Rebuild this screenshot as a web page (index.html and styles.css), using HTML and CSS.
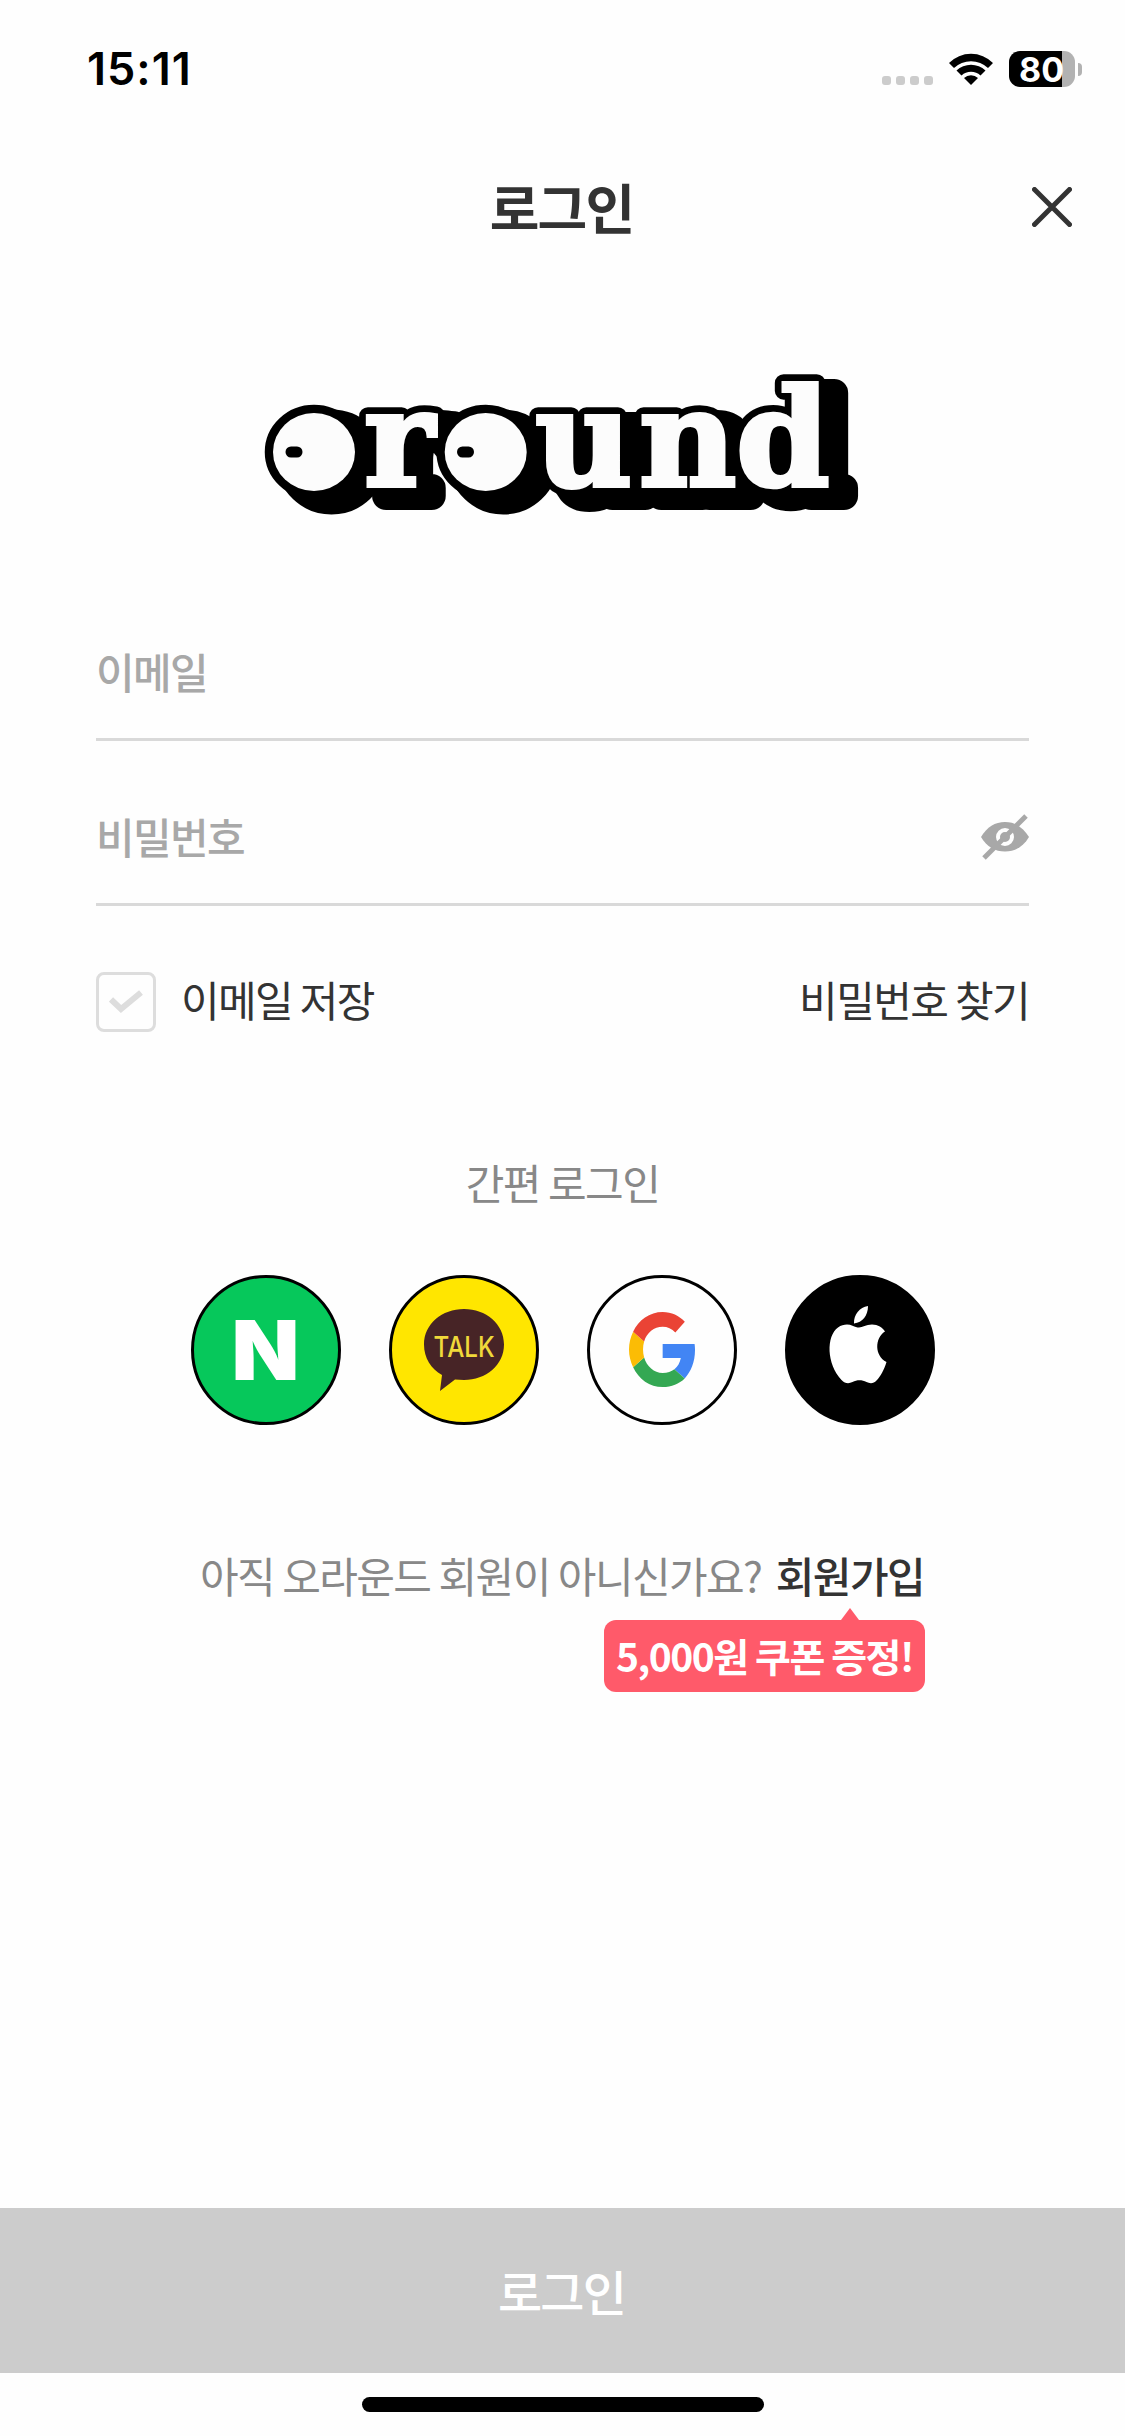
FILE: index.html
```html
<!DOCTYPE html>
<html lang="ko">
<head>
<meta charset="utf-8">
<title>로그인</title>
<link rel="stylesheet" href="styles.css">
</head>
<body>
<div class="screen">
  <header class="status">
    <span class="time">15:11</span>
    <div class="indicators">
      <div class="dots"><i></i><i></i><i></i><i></i></div>
      <svg class="wifi" viewBox="0 0 46 34" width="46" height="34">
        <path d="M1 11A31 31 0 0 1 45 11L40 16A24.500 24.500 0 0 0 6 16Z"/>
        <path d="M8.500 18.500A21 21 0 0 1 37.500 18.500L32.500 23.500A14 14 0 0 0 13.500 23.500Z"/>
        <path d="M16 26A10.500 10.500 0 0 1 30 26L23 33Z"/>
      </svg>
      <div class="battery"><span class="level">80</span></div>
      <div class="nub"></div>
    </div>
  </header>

  <div class="titlebar">
    <h1 class="title">로그인</h1>
    <svg class="close" viewBox="0 0 40 40" width="40" height="40"><path d="M2.500 2.500L37.500 37.500M37.500 2.500L2.500 37.500"/></svg>
  </div>

  <svg class="logo" viewBox="255 335 615 200" width="615" height="200">
    <defs>
      <g id="mark">
        <text class="wordmark" y="486"><tspan class="eye-letter" x="275" y="482">o</tspan><tspan x="364" y="486">r</tspan><tspan class="eye-letter" x="447" y="482">o</tspan><tspan x="535 639 736" y="486">und</tspan></text>
        <ellipse cx="314" cy="452" rx="40.500" ry="38.500"/>
        <ellipse cx="485.700" cy="452" rx="40.500" ry="38.500"/>
      </g>
    </defs>
    <use class="mark-shadow" href="#mark" x="17.500" y="10"/>
    <use class="mark-outline" href="#mark"/>
    <text class="wordmark face" y="486"><tspan x="364">r</tspan><tspan x="535 639 736">und</tspan></text>
    <ellipse class="eyeball" cx="314" cy="452" rx="41" ry="39"/>
    <ellipse class="eyeball" cx="485.700" cy="452" rx="41" ry="39"/>
    <rect x="285.500" y="446.500" width="17" height="11" rx="5.500"/>
    <rect x="457" y="446.500" width="17" height="11" rx="5.500"/>
  </svg>

  <main class="form">
    <div class="field"><span class="placeholder">이메일</span></div>
    <div class="field">
      <span class="placeholder">비밀번호</span>
      <svg class="eye" viewBox="0 0 48 46" width="48" height="46">
        <path class="eye-body" d="M0 23C6 13 14 8 24 8S42 13 48 23C42 33 34 37.500 24 37.500S6 33 0 23Z"/>
        <circle class="eye-ring" cx="24" cy="23" r="7"/>
        <path class="eye-slash" d="M3 44L45 2"/>
      </svg>
    </div>
    <div class="options">
      <label class="remember">
        <span class="checkbox"><svg viewBox="0 0 34 26" width="34" height="26"><path d="M2 10.500L12 20L32 3.500"/></svg></span>
        <span class="option-text">이메일 저장</span>
      </label>
      <span class="option-text">비밀번호 찾기</span>
    </div>
  </main>

  <section class="social">
    <h2 class="social-title">간편 로그인</h2>
    <div class="providers">
      <div class="provider naver"><svg viewBox="0 0 144 144" width="144" height="144"><text class="naver-n" transform="translate(37.500 102)" textLength="68" lengthAdjust="spacingAndGlyphs">N</text></svg></div>
      <div class="provider kakao"><svg viewBox="0 0 144 144" width="144" height="144">
        <path class="bubble" d="M72 31C94 31 112 46 112 66.500C112 87 94 102 72 102C69 102 66 101.800 63 101.500L48 113L50 97C39 91 32 80 32 66.500C32 46 50 31 72 31Z"/>
        <text class="talk" x="41.500" y="79" textLength="61" lengthAdjust="spacingAndGlyphs">TALK</text></svg></div>
      <div class="provider google"><svg viewBox="-39 -37 144 144" width="144" height="144"><g transform="translate(0 -3) scale(1.375 1.563)">
        <path fill="#4285f4" d="M48 24.550C48 22.900 47.900 21.700 47.700 20.450H24.480V29.500H37.700C37.100 32.500 35.400 35 33 36.650L40.500 42.500C45 38.300 48 32.100 48 24.550Z"/>
        <path fill="#34a853" d="M24.480 48C30.960 48 36.500 45.900 40.500 42.500L33 36.650C30.800 38.100 28 39 24.480 39C18.220 39 12.920 34.800 11 29.100L3 35.300C7 42.900 15 48 24.480 48Z"/>
        <path fill="#fbbc05" d="M11 29.100C10.500 27.500 10.200 25.800 10.200 24C10.200 22.200 10.500 20.500 11 18.900L3 12.700C1.100 16.300 0 20 0 24C0 28 1.100 31.800 3 35.300Z"/>
        <path fill="#ea4335" d="M24.480 9.500C28 9.500 31.200 10.700 33.700 13.100L40.600 6.200C36.400 2.400 31 0 24.480 0C15 0 7 5.100 3 12.700L11 18.900C12.920 13.200 18.220 9.500 24.480 9.500Z"/>
      </g></svg></div>
      <div class="provider apple"><svg viewBox="0 0 144 144" width="144" height="144">
        <path d="M80 28C80 37.500 74.500 44.500 66 45.500C65.500 36.500 71.500 29.500 80 28Z"/>
        <path d="M71 49.500C74.500 49.500 78 46.500 84 46.500C90 46.500 94.500 49.500 97 53.500C86.500 60 86.500 78 98.500 84C96 92 92.500 98.500 88.500 102.500C85.500 106 81.500 105.500 78.500 104C74 101.500 69 101.500 64.500 104C60.500 106 57 105.500 53.500 102C38.500 86 38 58 50 49.500C55 46 60.500 46 64.500 47.700C67 48.700 69 49.500 71 49.500Z"/></svg></div>
    </div>
  </section>

  <section class="join">
    <div class="join-line"><span class="question">아직 오라운드 회원이 아니신가요?</span><span class="signup">회원가입</span></div>
    <div class="coupon">5,000원 쿠폰 증정!</div>
  </section>

  <button class="submit">로그인</button>
  <footer class="home"><div class="home-bar"></div></footer>
</div>
</body>
</html>
```
FILE: styles.css
```css
* { box-sizing: border-box; }
body { margin: 0; background: #fefefe; font-family: "Noto Sans CJK KR", sans-serif; color: #333; }
.screen { display: flex; flex-direction: column; width: 1125px; height: 2436px; overflow: hidden; }
.screen > * { flex-shrink: 0; }

.status { display: flex; justify-content: space-between; height: 141px; padding: 44px 43px 0 87px; }
.time { font: 600 45px/50px Inter, sans-serif; color: #000; letter-spacing: 1px; }
.indicators { display: flex; height: 43px; align-items: flex-end; }
.dots { display: flex; gap: 5px; margin: 0 15px 2px 0; }
.dots i { width: 9px; height: 9px; border-radius: 3px; background: #ccc; }
.wifi { margin: 0 15px 1px 0; }
.battery { width: 66px; height: 36px; border-radius: 11px; background: linear-gradient(90deg, #000 53px, #b2b2b2 53px); }
.level { display: block; padding-left: 10px; font: 700 34px/37px Inter, sans-serif; color: #fff; }
.nub { width: 4px; height: 13px; margin: 0 0 11px 3px; border-radius: 0 4px 4px 0; background: #b2b2b2; }

.titlebar { display: grid; grid-template-columns: 1fr auto 1fr; align-items: center; height: 132px; padding: 0 53px 0 53px; }
.title { grid-column: 2; margin: 0; padding-right: 2px; font-size: 54px; line-height: 80px; font-weight: 700; letter-spacing: -1.800px; }
.close { justify-self: end; fill: none; stroke: #333; stroke-width: 5; stroke-linecap: round; }

.logo { margin: 62px 0 0 255px; }
.wordmark { font: 700 134px "DejaVu Serif", serif; }
.eye-letter { font-size: 115px; }
.mark-shadow { stroke: #000; stroke-width: 28; stroke-linejoin: round; }
.mark-outline { stroke: #000; stroke-width: 17.500px; stroke-linejoin: round; }
.face { fill: #fcfcfc; stroke: #fcfcfc; stroke-width: 4; }
.eyeball { fill: #fcfcfc; }

.form { padding: 41px 96px 0; }
.field { display: flex; justify-content: space-between; align-items: center; height: 165px; padding-top: 28px; border-bottom: 3px solid #d9d9d9; }
.placeholder { color: #a8a8a8; font-size: 42px; line-height: 60px; font-weight: 500; letter-spacing: -1.650px; }
.eye { margin-top: 2px; }
.eye-body { fill: #a8a8a8; }
.eye-ring { fill: none; stroke: #fefefe; stroke-width: 4; }
.eye-slash { stroke: #a8a8a8; stroke-width: 5; }
.options { display: flex; justify-content: space-between; align-items: center; height: 60px; margin-top: 66px; font-size: 42px; letter-spacing: -1.600px; word-spacing: -2.500px; }
.remember { display: flex; align-items: center; gap: 25px; }
.option-text { line-height: 60px; padding-bottom: 7px; }
.checkbox { display: grid; place-items: center; width: 60px; height: 60px; border: 3px solid #ddd; border-radius: 8px; }
.checkbox path { fill: none; stroke: #ddd; stroke-width: 6; }

.social { padding-top: 119px; }
.social-title { margin: 0; height: 124px; text-align: center; color: #888; font-size: 42px; line-height: 62px; font-weight: 400; letter-spacing: -1.600px; word-spacing: -2px; }
.providers { display: flex; justify-content: center; gap: 48px; }
.provider { width: 150px; height: 150px; border: 3px solid #000; border-radius: 50%; overflow: hidden; }
.provider svg { display: block; }
.naver { background: #06c85b; }
.naver-n { font: 900 82px Inter, sans-serif; fill: #fff; }
.kakao { background: #ffe600; }
.bubble { fill: #472426; }
.talk { font: 500 29px Inter, sans-serif; fill: #f0d93a; }
.apple { background: #000; fill: #fff; }

.join { display: flex; flex-direction: column; width: 725px; margin: 119px 0 0 200px; }
.join-line { display: flex; justify-content: space-between; height: 76px; font-size: 42px; line-height: 62px; letter-spacing: -1.600px; word-spacing: -2px; white-space: nowrap; }
.question { color: #888; }
.signup { padding-right: 1px; font-weight: 500; }
.coupon { position: relative; align-self: flex-end; width: 321px; height: 72px; border-radius: 12px; background: #ff5a6a; color: #fff; font-size: 39px; line-height: 70px; font-weight: 700; text-align: center; letter-spacing: -1.500px; word-spacing: -2px; white-space: nowrap; }
.coupon::before { content: ""; position: absolute; top: -12px; right: 66px; border: solid transparent; border-width: 0 9px 12px; border-bottom-color: #ff5a6a; }

.submit { width: 100%; height: 165px; margin-top: auto; padding: 0 2px 0 0; border: 0; background: #ccc; color: #fff; font: 500 48px/165px "Noto Sans CJK KR", sans-serif; letter-spacing: -1.800px; }
.home { display: flex; justify-content: center; height: 63px; padding-top: 24px; }
.home-bar { width: 402px; height: 15px; border-radius: 8px; background: #000; }
```
